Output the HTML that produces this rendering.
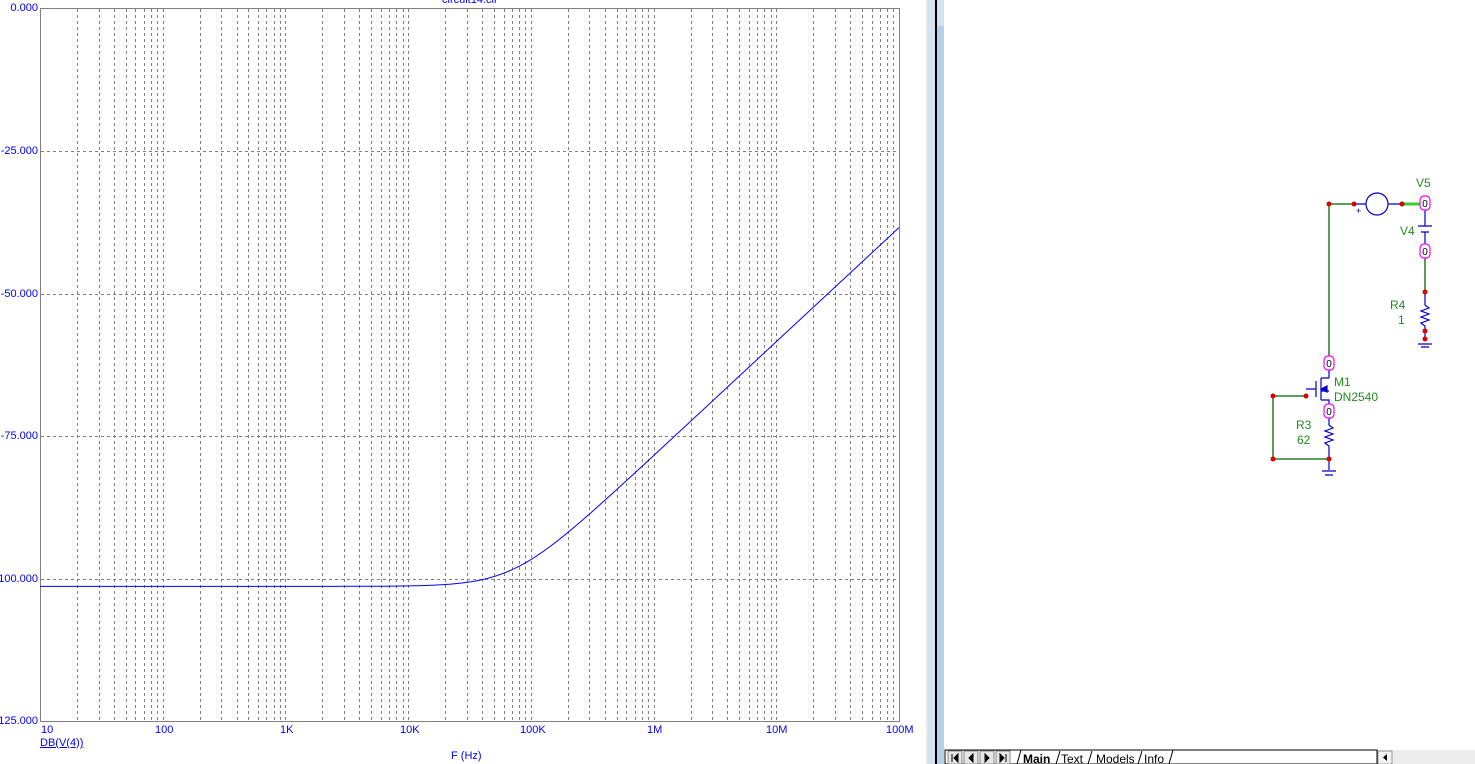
<!DOCTYPE html>
<html><head><meta charset="utf-8"><style>
body{margin:0;width:1475px;height:764px;overflow:hidden;background:#fff;font-family:"Liberation Sans",sans-serif;position:relative}
.t{position:absolute;font-size:11px;color:#0000ff;white-space:nowrap}
.y{position:absolute;right:1437px;font-size:11px;color:#0000ff;white-space:nowrap;text-align:right}
</style></head><body>
<svg id="p" width="1475" height="764" style="position:absolute;left:0;top:0" xmlns="http://www.w3.org/2000/svg">
<rect x="926" y="0" width="2" height="764" fill="#e8e8e8"/>
<rect x="928" y="0" width="7" height="764" fill="#d4e2f2"/>
<rect x="935" y="0" width="2" height="764" fill="#000"/>
<rect x="937" y="0" width="7" height="764" fill="#b8cfe8"/>
<rect x="937" y="0" width="7" height="26" fill="#d4e2f2"/>
<g id="grid" stroke="#808080" stroke-dasharray="3,3" stroke-width="1"></g>
<rect x="40.5" y="8.5" width="859" height="713" fill="none" stroke="#808080"/>
<path id="curve" fill="none" stroke="#0000ff" stroke-width="1"/>
<g stroke="#006400" fill="none" stroke-width="1.3">
<path d="M1329 204V363M1329 204H1355M1402 204H1425M1425 258V292M1273 396H1306M1273 396V459H1329"/>
</g>
<path d="M1402 204H1425" stroke="#33cc33" stroke-width="3"/>
<g stroke="#0000cc" fill="none" stroke-width="1.2">
<circle cx="1377" cy="204" r="11"/>
<path d="M1355 204H1366M1388 204H1402M1425 210V226M1418 226H1432M1421 232H1429M1425 232V246M1425 292V305l4 3-8 3 8 3-8 3 8 3-8 3 4 3V340M1418 344H1432M1421 347H1429M1329 370V378M1329 378H1321M1321 378V400M1316 381V397M1306 389H1316M1321 391H1329M1321 400H1329V405M1329 416V425l4 3-8 3 8 3-8 3 8 3-8 3 4 3V470M1322 471H1336M1325 475H1333"/>
<path d="M1321 389l6-3v6z" fill="#0000cc"/>
</g>
<g fill="#dd0000">
<circle cx="1329" cy="204" r="2.5"/><circle cx="1354" cy="204" r="2.5"/><circle cx="1402" cy="204" r="2.5"/>
<circle cx="1425" cy="292" r="2.5"/><circle cx="1425" cy="331" r="2.5"/><circle cx="1425" cy="339" r="2.5"/>
<circle cx="1273" cy="396" r="2.5"/><circle cx="1306" cy="396" r="2.5"/><circle cx="1273" cy="459" r="2.5"/><circle cx="1329" cy="459" r="2.5"/>
</g>
<g fill="#fff" stroke="#ff00ff" stroke-width="1.2">
<rect x="1420" y="196" width="10" height="14" rx="4"/><rect x="1420" y="244" width="10" height="14" rx="4"/>
<rect x="1324" y="356" width="10" height="14" rx="4"/><rect x="1324" y="404" width="10" height="14" rx="4"/>
</g>
<g font-family="Liberation Sans" font-size="10" fill="#000" text-anchor="middle">
<text x="1425" y="207">0</text><text x="1425" y="255">0</text><text x="1329" y="367">0</text><text x="1329" y="415">0</text>
</g>
<g font-family="Liberation Sans" font-size="12" fill="#228b22">
<text x="1416" y="187">V5</text><text x="1400" y="235">V4</text><text x="1390" y="309">R4</text><text x="1398" y="324">1</text>
<text x="1334" y="386">M1</text><text x="1334" y="401">DN2540</text><text x="1296" y="429">R3</text><text x="1297" y="444">62</text>
</g>
<text x="1356" y="214" font-size="9" fill="#0000cc" font-family="Liberation Sans">+</text>
<rect x="945" y="750" width="530" height="14" fill="#f0f0f0"/>
<rect x="945" y="750" width="432" height="14" fill="#fff" stroke="#000" stroke-width="1"/>
<rect x="1378" y="750" width="97" height="14" fill="#ececec"/>
<rect x="1378" y="751" width="14" height="13" fill="#f4f4f4" stroke="#999"/>
<path d="M1387 754l-4 3.5 4 3.5z" fill="#000"/>
<g fill="#e6e6e6" stroke="#888"><rect x="948" y="751" width="14" height="13"/><rect x="964" y="751" width="14" height="13"/><rect x="980" y="751" width="14" height="13"/><rect x="996" y="751" width="14" height="13"/></g>
<path d="M952 754v8M958 754l-4 4 4 4zM973 754l-4 4 4 4zM985 754l4 4-4 4zM1000 754l4 4-4 4zM1006 754v8" stroke="#000" fill="#000"/>
<path d="M1017 764l4-14h152l-4 14" fill="none" stroke="#000"/>
<text x="1023" y="763" font-size="12" font-weight="bold" font-family="Liberation Sans">Main</text>
<text x="1061" y="763" font-size="12" fill="#000" font-family="Liberation Sans">Text</text>
<text x="1096" y="763" font-size="12" fill="#000" font-family="Liberation Sans">Models</text>
<text x="1144" y="763" font-size="12" fill="#000" font-family="Liberation Sans">Info</text>
<path d="M1056 764l4-13M1088 764l4-13M1138 764l4-13" stroke="#000"/>
</svg>
<div class="t" style="left:442px;top:-6px">circuit14.cir</div>
<div class="y" style="top:2px">0.000</div>
<div class="y" style="top:145px">-25.000</div>
<div class="y" style="top:288px">-50.000</div>
<div class="y" style="top:430px">-75.000</div>
<div class="y" style="top:573px">-100.000</div>
<div class="y" style="top:715px">-125.000</div>
<div class="t" style="left:41px;top:724px">10</div>
<div class="t" style="left:155px;top:724px">100</div>
<div class="t" style="left:280px;top:724px">1K</div>
<div class="t" style="left:400px;top:724px">10K</div>
<div class="t" style="left:520px;top:724px">100K</div>
<div class="t" style="left:647px;top:724px">1M</div>
<div class="t" style="left:766px;top:724px">10M</div>
<div class="t" style="left:886px;top:724px">100M</div>
<div class="t" style="left:40px;top:737px;text-decoration:underline">DB(V(4))</div>
<div class="t" style="left:451px;top:750px">F (Hz)</div>
<script>
var g=document.getElementById('grid'),x0=40,dw=(899-40)/7,s='';
for(var d=0;d<7;d++)for(var m=1;m<=9;m++){if(d==0&&m==1)continue;var x=Math.round(x0+dw*(d+Math.log10(m)))+.5;s+='<line x1="'+x+'" y1="9" x2="'+x+'" y2="721"/>';}
[151,294,436,579].forEach(function(y){s+='<line x1="41" y1="'+(y+.5)+'" x2="899" y2="'+(y+.5)+'"/>'});
g.innerHTML=s;
var p='',fc=71600;
for(var x=40;x<=899;x++){var f=10*Math.pow(10,(x-40)/dw),r=f/fc,db=-101.4+10*Math.log10(1+r*r),y=8+(-db)*(713/125);p+=(x==40?'M':'L')+x+' '+y.toFixed(1);}
document.getElementById('curve').setAttribute('d',p);
</script>
</body></html>
